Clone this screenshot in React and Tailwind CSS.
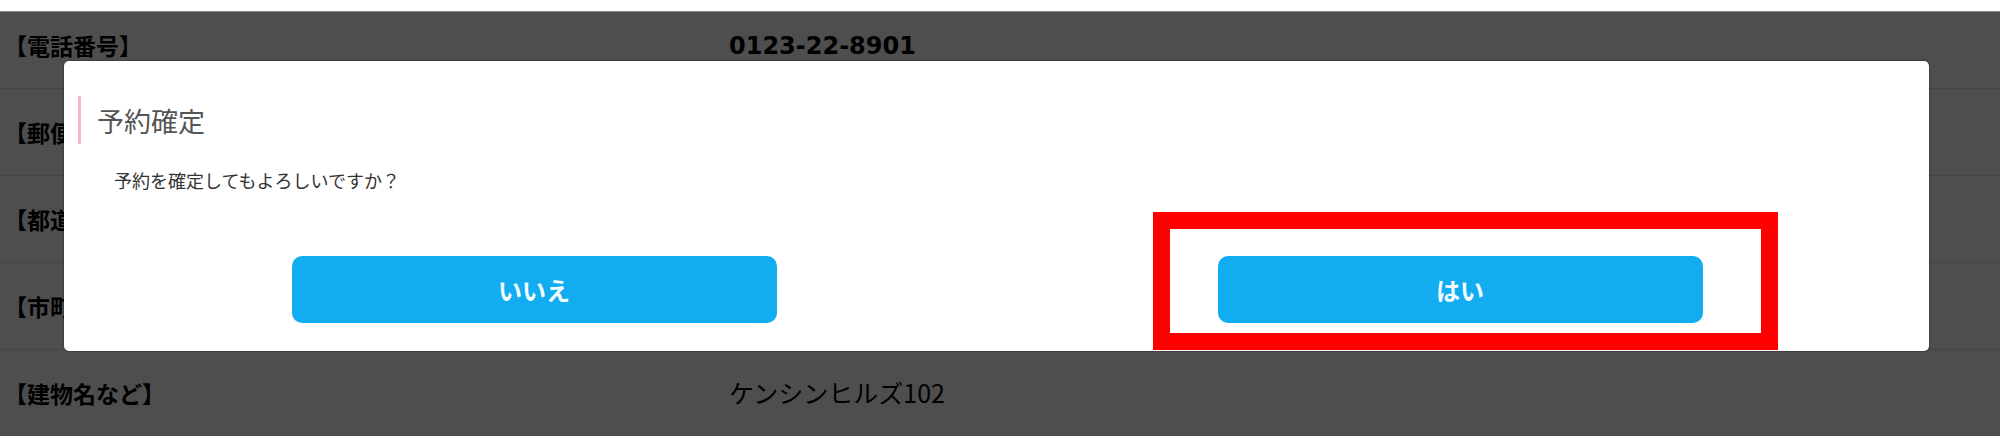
const rows = [
  { label: "【電話番号】", value: "0123-22-8901", mono: true },
  { label: "【郵便番号】", value: "123-4567", mono: true },
  { label: "【都道府県】", value: "東京都" },
  { label: "【市町村・番地】", value: "新宿区1-2-3" },
  { label: "【建物名など】", value: "ケンシンヒルズ102" },
];

const jp = "font-['Noto_Sans_CJK_JP','Noto_Sans',sans-serif]";

function InfoRow({ row, first }) {
  return (
    <div
      className={`flex items-center border-b border-[#454545] ${
        first ? "h-[77px] pb-[9px]" : "h-[87px]"
      }`}
    >
      <div className={`w-[729px] pl-[4px] text-[23px] font-bold text-black ${jp}`}>{row.label}</div>
      {row.mono ? (
        <div className="text-[24px] font-bold text-black font-['DejaVu_Sans',sans-serif]">{row.value}</div>
      ) : (
        <div className={`text-[25px] text-black ${jp}`}>{row.value}</div>
      )}
    </div>
  );
}

function ConfirmModal() {
  return (
    <div className="absolute left-[64px] top-[61px] w-[1865px] h-[290px] bg-white rounded-[5px] shadow-[0_0_2px_rgba(0,0,0,0.6)] flex flex-col">
      <div className="pt-[35px] pl-[14px]">
        <div className="border-l-[3px] border-[#f5b9c2] h-[48px] pl-[16px] flex items-center">
          <span className={`text-[27px] text-[#555] leading-none ${jp}`}>予約確定</span>
        </div>
      </div>
      <p className={`mt-[23px] pl-[50px] text-[18px] leading-[27px] text-[#333] ${jp}`}>
        予約を確定してもよろしいですか？
      </p>
      <div className="mt-[62px] grid grid-cols-2 pl-[7px] pr-[6px]">
        <div className="flex justify-center">
          <button className={`w-[485px] h-[67px] rounded-[10px] bg-[#12acf0] text-[24px] font-bold text-[#f2fbff] ${jp}`}>
            いいえ
          </button>
        </div>
        <div className="flex justify-center">
          <button className={`w-[485px] h-[67px] rounded-[10px] bg-[#12acf0] text-[24px] font-bold text-[#f2fbff] ${jp}`}>
            はい
          </button>
        </div>
      </div>
    </div>
  );
}

export default function App() {
  return (
    <div className="relative w-[2000px] h-[436px] overflow-hidden bg-white">
      <div className="h-[11px] bg-white" />
      <div className="h-[425px] bg-[#4e4e4e] border-t border-[#8a8a8a]">
        {rows.map((row, i) => (
          <InfoRow key={i} row={row} first={i === 0} />
        ))}
      </div>

      <ConfirmModal />

      {/* annotation box round the confirm button */}
      <div className="absolute left-[1153px] top-[212px] w-[625px] h-[138px] border-[17px] border-[#ff0000]" />
    </div>
  );
}
